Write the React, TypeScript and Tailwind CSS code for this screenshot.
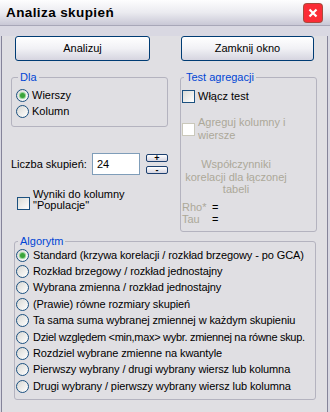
import type { ReactNode } from "react";

function App() {
  return (
    <div className="h-[412px] w-[330px] overflow-hidden bg-[#d9d8e2] font-['Liberation_Sans',Arial,sans-serif] text-[11px] leading-[13px] text-black">
      <TitleBar />
      <div className="ml-px mr-[2px] h-[384px] border border-t-0 border-[#85849a] bg-[#e0dfe3]">
        <div className="ml-[13px] mt-[10px] flex gap-[31px]">
          <XpButton className="w-[135px]">Analizuj</XpButton>
          <XpButton className="w-[133px]">Zamknij okno</XpButton>
        </div>

        <div className="ml-[9px] mt-[10px] flex items-start">
          <LeftColumn />
          <TestGroup />
        </div>

        <GroupBox title="Algorytm" className="ml-[12px] mt-[3px] h-[165px] w-[302px] pl-px">
          <div className="flex flex-col">
            {algorithms.map((item, i) => (
              <label key={item.label} className="flex h-[16.4px] items-center gap-[4px]">
                <Radio checked={i === 0} />
                <span className={`whitespace-nowrap ${item.tight ? "tracking-[-0.3px]" : "tracking-[-0.1px]"}`}>
                  {item.label}
                </span>
              </label>
            ))}
          </div>
        </GroupBox>
      </div>
    </div>
  );
}

export default App;

const algorithms = [
  { label: "Standard (krzywa korelacji / rozkład brzegowy - po GCA)" },
  { label: "Rozkład brzegowy / rozkład jednostajny" },
  { label: "Wybrana zmienna / rozkład jednostajny" },
  { label: "(Prawie) równe rozmiary skupień" },
  { label: "Ta sama suma wybranej zmiennej w każdym skupieniu" },
  { label: "Dziel względem <min,max> wybr. zmiennej na równe skup.", tight: true },
  { label: "Rozdziel wybrane zmienne na kwantyle" },
  { label: "Pierwszy wybrany / drugi wybrany wiersz lub kolumna" },
  { label: "Drugi wybrany / pierwszy wybrany wiersz lub kolumna" },
];

function TitleBar() {
  return (
    <div className="flex h-[26px] items-center justify-between border-b border-[#a8a7b8] bg-linear-to-b from-[#fdfdfe] via-[#ebebf0] to-[#c9c8d6] pl-[6px] pr-[8px]">
      <span className="text-[13.5px] font-bold leading-none tracking-[0.4px]">Analiza skupień</span>
      <div className="flex h-[18px] w-[18px] items-center justify-center rounded-[3px] bg-red-500 ring-1 ring-[#a9493c]">
        <svg width="10" height="10" viewBox="0 0 10 10">
          <path d="M1.5 1.5L8.5 8.5M8.5 1.5L1.5 8.5" stroke="#ffffff" strokeWidth="2.2" />
        </svg>
      </div>
    </div>
  );
}

function LeftColumn() {
  return (
    <div className="flex w-[157px] flex-col">
      <GroupBox title="Dla" className="h-[56px] w-[157px] px-[4px]">
        <div className="flex flex-col pt-[4px]">
          <label className="flex h-[16px] items-center gap-[3px]">
            <Radio checked />
            <span>Wierszy</span>
          </label>
          <label className="flex h-[16px] items-center gap-[3px]">
            <Radio />
            <span>Kolumn</span>
          </label>
        </div>
      </GroupBox>

      <div className="mt-[26px] flex h-[22px] items-center">
        <span className="w-[81px]">Liczba skupień:</span>
        <div className="flex h-[22px] w-[48px] items-center border border-[#7f9db9] bg-white pl-[4px]">24</div>
        <div className="ml-[6px] flex h-[22px] flex-col justify-between py-px">
          <SpinButton>+</SpinButton>
          <SpinButton>-</SpinButton>
        </div>
      </div>

      <label className="ml-[6px] mt-[14px] flex items-start gap-[3px]">
        <Checkbox className="mt-[8px]" />
        <span className="leading-[11px]">
          Wyniki do kolumny
          <br />
          "Populacje"
        </span>
      </label>
    </div>
  );
}

function TestGroup() {
  return (
    <GroupBox title="Test agregacji" className="ml-[12px] h-[161px] w-[137px] pl-px">
      <div className="flex flex-col pt-[7px]">
        <label className="flex h-[13px] items-center gap-[3px]">
          <Checkbox />
          <span>Włącz test</span>
        </label>
        <label className="mt-[13px] flex items-center gap-[3px]">
          <Checkbox disabled />
          <span className="text-[#aca899]">
            Agreguj kolumny i
            <br />
            wiersze
          </span>
        </label>
        <p className="mt-[16px] w-[108px] whitespace-nowrap text-center leading-[12.5px] text-[#aca899]">
          Współczynniki
          <br />
          korelacji dla łączonej
          <br />
          tabeli
        </p>
        <div className="mt-[5px] grid grid-cols-[30px_auto] leading-[12px]">
          <span className="text-[#aca899]">Rho*</span>
          <span>=</span>
          <span className="text-[#aca899]">Tau</span>
          <span>=</span>
        </div>
      </div>
    </GroupBox>
  );
}

interface IGroupBox {
  title: string;
  className?: string;
  children: ReactNode;
}

function GroupBox({ title, className = "", children }: IGroupBox) {
  return (
    <fieldset className={`min-w-0 rounded-[3px] border border-[#b4b3bf] ${className}`}>
      <legend className="ml-[2px] px-[2px] leading-[12px] text-[#0046d5]">{title}</legend>
      {children}
    </fieldset>
  );
}

function XpButton({ className = "", children }: { className?: string; children: ReactNode }) {
  return (
    <button className={`flex h-[25px] items-center justify-center rounded-[3px] border border-[#003c74] bg-linear-to-b from-white via-[#f1f1f5] to-[#d6d5e0] ${className}`}>
      {children}
    </button>
  );
}

function SpinButton({ children }: { children: ReactNode }) {
  return (
    <div className="flex h-[8px] w-[22px] items-center justify-center rounded-[2px] border border-[#1c3f6e] bg-linear-to-b from-white to-[#d5d4e0] text-[9px] font-bold leading-[6px]">
      {children}
    </div>
  );
}

function Radio({ checked }: { checked?: boolean }) {
  return (
    <span className="flex h-[13px] w-[13px] shrink-0 items-center justify-center rounded-full border border-[#1c5180] bg-linear-to-br from-[#d8d8d4] to-white">
      {checked && <span className="h-[5px] w-[5px] rounded-full bg-[#3ba33b] shadow-[0_0_0_1px_#93d693]" />}
    </span>
  );
}

function Checkbox({ disabled, className = "" }: { disabled?: boolean; className?: string }) {
  return (
    <span
      className={`block h-[13px] w-[13px] shrink-0 border ${
        disabled ? "border-[#cac8bb] bg-white" : "border-[#1c5180] bg-linear-to-br from-[#dcdcd7] to-white"
      } ${className}`}
    />
  );
}
